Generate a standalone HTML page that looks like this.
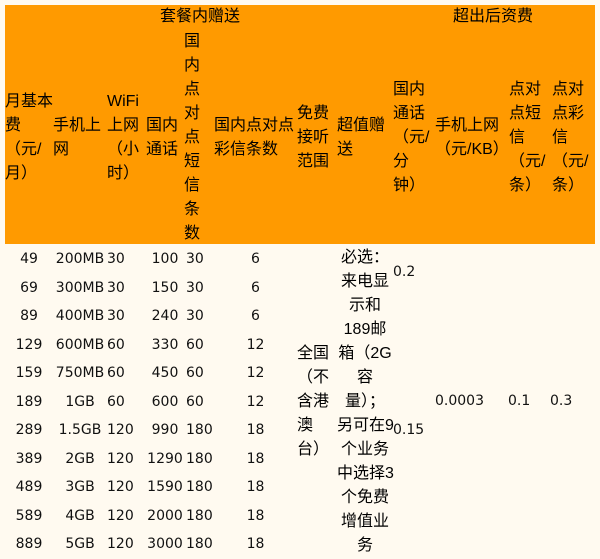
<!DOCTYPE html>
<html><head><meta charset="utf-8"><style>
html,body{margin:0;padding:0;}
body{width:600px;height:554px;background:#fffaf0;position:relative;overflow:hidden;font-family:"Liberation Sans","Noto Sans CJK SC",sans-serif;font-size:16px;color:#000;}
.o{position:absolute;left:5px;top:5px;width:590px;height:239px;background:#ff9a00;}
.t{position:absolute;line-height:24px;white-space:nowrap;}
.n{position:absolute;font-family:"DejaVu Sans",sans-serif;font-size:14px;line-height:20px;white-space:nowrap;color:#111;}
.c{text-align:center;}
</style></head><body>
<div class="o"></div>
<div class="t" style="left:160px;top:5px">套餐内赠送</div>
<div class="t" style="left:453px;top:5px">超出后资费</div>
<div class="t" style="left:5px;top:90px">月基本<br>费<br>（元/<br>月）</div>
<div class="t" style="left:53px;top:114px">手机上<br>网</div>
<div class="t" style="left:107px;top:90px">WiFi<br>上网<br>（小<br>时）</div>
<div class="t" style="left:146px;top:114px">国内<br>通话</div>
<div class="t" style="left:184px;top:30px">国<br>内<br>点<br>对<br>点<br>短<br>信<br>条<br>数</div>
<div class="t" style="left:214px;top:114px">国内点对点<br>彩信条数</div>
<div class="t" style="left:297px;top:102px">免费<br>接听<br>范围</div>
<div class="t" style="left:337px;top:114px">超值赠<br>送</div>
<div class="t" style="left:393px;top:78px">国内<br>通话<br>（元/<br>分<br>钟）</div>
<div class="t" style="left:435px;top:114px">手机上网<br>（元/KB）</div>
<div class="t" style="left:509px;top:78px">点对<br>点短<br>信<br>（元/<br>条）</div>
<div class="t" style="left:552px;top:78px">点对<br>点彩<br>信<br>（元/<br>条）</div>

<div class="n c" style="left:5px;width:48px;top:245px;line-height:28.5px">49<br>69<br>89<br>129<br>159<br>189<br>289<br>389<br>489<br>589<br>889</div>
<div class="n c" style="left:53px;width:54px;top:245px;line-height:28.5px">200MB<br>300MB<br>400MB<br>600MB<br>750MB<br>1GB<br>1.5GB<br>2GB<br>3GB<br>4GB<br>5GB</div>
<div class="n" style="left:107px;top:245px;line-height:28.5px">30<br>30<br>30<br>60<br>60<br>60<br>120<br>120<br>120<br>120<br>120</div>
<div class="n c" style="left:146px;width:38px;top:245px;line-height:28.5px">100<br>150<br>240<br>330<br>450<br>600<br>990<br>1290<br>1590<br>2000<br>3000</div>
<div class="n" style="left:186px;top:245px;line-height:28.5px">30<br>30<br>30<br>60<br>60<br>60<br>180<br>180<br>180<br>180<br>180</div>
<div class="n c" style="left:214px;width:83px;top:245px;line-height:28.5px">6<br>6<br>6<br>12<br>12<br>12<br>18<br>18<br>18<br>18<br>18</div>
<div class="t" style="left:297px;top:342px">全国<br>（不<br>含港<br>澳<br>台）</div>
<div class="t c" style="left:337px;width:56px;top:246px">必选：<br>来电显<br>示和<br>189邮<br>箱（2G<br>容<br>量）；<br>另可在9<br>个业务<br>中选择3<br>个免费<br>增值业<br>务</div>
<div class="n" style="left:393px;top:262px">0.2</div>
<div class="n" style="left:393px;top:420px">0.15</div>
<div class="n" style="left:435px;top:391px">0.0003</div>
<div class="n" style="left:508px;top:391px">0.1</div>
<div class="n" style="left:550px;top:391px">0.3</div>
</body></html>
